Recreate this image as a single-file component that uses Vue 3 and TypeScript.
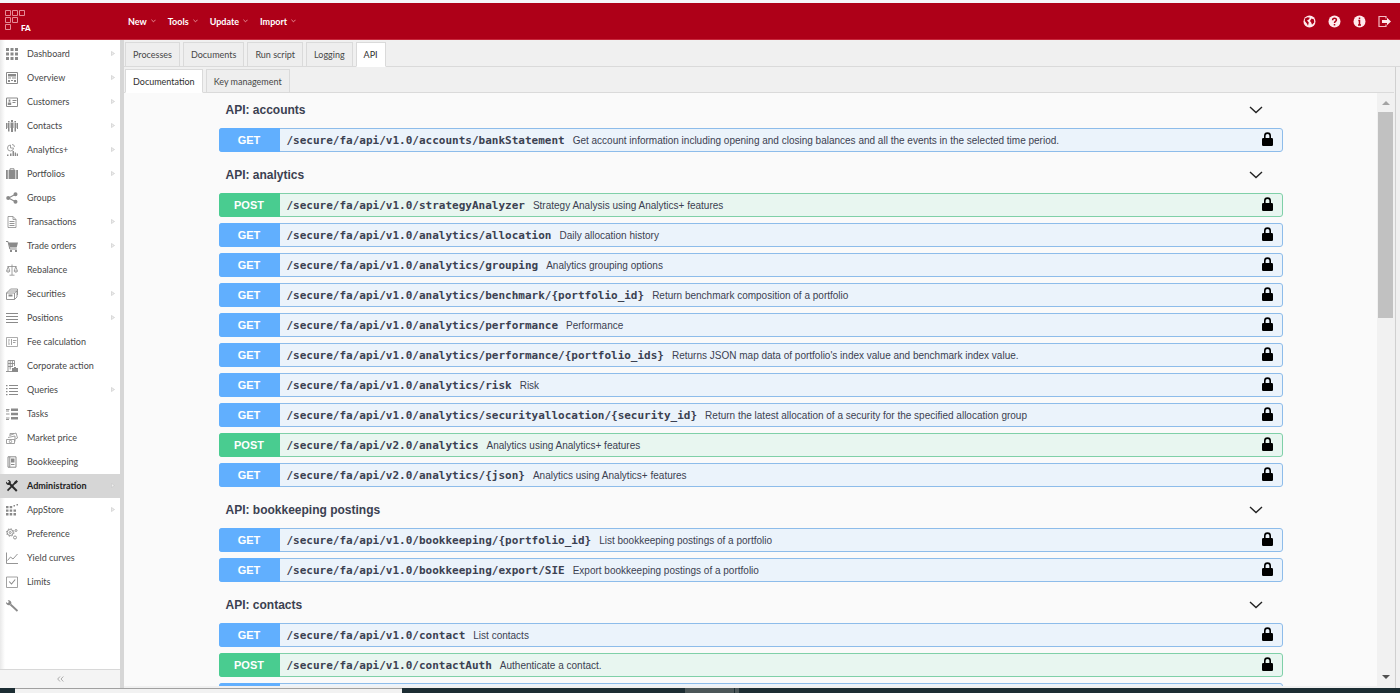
<script setup lang="ts">
import { ref } from 'vue'

type Method = 'GET' | 'POST'
interface NavItem { label: string; icon: string; more?: boolean }
interface Operation { method: Method; path: string; summary: string }
interface Section { title: string; operations: Operation[] }

const menus = ['New', 'Tools', 'Update', 'Import']
const tabs = ['Processes', 'Documents', 'Run script', 'Logging', 'API']
const subTabs = ['Documentation', 'Key management']
const activeTab = ref('API')
const activeSubTab = ref('Documentation')
const activeNav = ref('Administration')

const fill = (d: string) => `<path fill="currentColor" d="${d}"/>`
const line = (d: string, w = 1) =>
  `<path fill="none" stroke="currentColor" stroke-width="${w}" d="${d}"/>`

const icons: Record<string, string> = {
  dashboard: fill('M0 0h3v3H0zM4.500 0h3v3h-3zM9 0h3v3H9zM0 4.500h3v3H0zM4.500 4.500h3v3h-3zM9 4.500h3v3H9zM0 9h3v3H0zM4.500 9h3v3h-3zM9 9h3v3H9z'),
  overview: line('M.5.5h11v11H.5z') + fill('M2 2h8v2.500H2zM2 5.500h3v1H2zM6 5.500h4v1H6zM2 8h2v2H2zM5 8h2v1H5zM8 8h2v2H8z'),
  customers: line('M.5 2h11v8.500H.5z') + fill('M2.600 3.500h1.800v2.300H2.600zM1.800 6.400h3.400V9H1.800zM6.500 4h4v1h-4zM6.500 6h3v1h-3z'),
  contacts: fill('M5 0h2v2H5zM4.500 2.500h3V8H7v4H5V8h-.5zM2 1h1.600v1.500H2zM1.500 3h2v8.500H2V8h-.5zM8.400 1H10v1.500H8.400zM8.500 3h2v5H10v3.500H8.500zM0 3h1v6H0zM11 3h1v6h-1z'),
  analytics: line('M4.500 1a3 3 0 1 0 3 3h-3zM6 .5A2.500 2.500 0 0 1 8.500 3', 0.8) + fill('M1 10.500h1.500V12H1zM4 9.500h1.500V12H4zM6.500 7H8v5H6.500zM8.700 8.500h1.300V12H8.700zM10.700 9.500H12V12h-1.300z'),
  portfolios: line('M4 2V.8h4V2') + fill('M0 2h1.800v9H0zM2.600 2h6.800v9H2.600zM10.200 2H12v9h-1.800z'),
  groups: line('M9.500 2.300 2.500 6l7 3.700', 1.1) + fill('M9.500.3a2 2 0 1 1 0 4 2 2 0 0 1 0-4zM2.200 4a2 2 0 1 1 0 4 2 2 0 0 1 0-4zM9.500 7.700a2 2 0 1 1 0 4 2 2 0 0 1 0-4z'),
  transactions: line('M2 .5h5l3 3v8H2zM7 .5v3h3', 0.8) + line('M3.500 5.500h5M3.500 7.500h5M3.500 9.500h5', 0.9),
  orders: line('M0 1.500h2L3.800 9h7', 1) + fill('M2.500 2.500H12l-1.300 5H3.700zM4 10h2v2H4zM9 10h2v2H9z'),
  rebalance: line('M6 .5v10.500M3.500 11.200h5M1.500 2.500h9M2.200 2.500.6 7h3.200zM9.800 2.500 8.200 7h3.200zM.5 7.200c.6 1.400 2.800 1.400 3.400 0M8.100 7.200c.6 1.400 2.800 1.400 3.400 0', 0.8),
  securities: line('M.5 5h8v6.500h-8zM.5 5l2-2h8.500v6l-2.500 2.500M8.500 5 11 3M3 2.500 4.500 1h7v6', 0.9) + fill('M2.500 6.500h4v2h-4z'),
  positions: line('M0 1.500h12M0 4.500h12M0 7.500h12M0 10.500h12', 1.2),
  fee: line('M.5 1.500h11v9H.5z', 0.7) + line('M2 4h2M2 6h1.500M2 8h2M5.500 3v6M7 4.500h3.500M7 6.500h2.500', 0.8),
  corporate: line('M2 11.500V.5h6.500V6M0 11.500h6M2 3.500h6.500M2 6.500h5M4.200.5v9M6.400.5v6', 0.9) + fill('M6 8h6v4H6zM8 7h2v1H8z'),
  queries: fill('M0 1h1.500v1.200H0zM0 4h1.500v1.200H0zM0 7h1.500v1.200H0zM0 10h1.500v1.200H0zM3 1h9v1H3zM3 4h9v1H3zM3 7h9v1H3zM3 10h9v1H3z'),
  tasks: fill('M5 .5h7V3H5zM5 4.800h7v2.500H5zM5 9h7v2.500H5z') + line('M0 1.500h3.500M0 3h3M0 6h3.500M0 10h3.500M0 11.500h3', 0.9),
  market: line('M3.500 3.500 10 1l1.500 5-2 1M2 5.500l7-1.500V9.500M.5 7.500h8v4h-8zM4 3.300V1.500h4', 0.8) + line('M3.300 9.500a1.200 1.200 0 1 0 2.400 0 1.200 1.200 0 1 0-2.400 0', 0.8),
  book: line('M2 .8h8v10.400H2zM3.800.8v10.400', 1) + fill('M5 2.500h3.500v4H5zM5 8h3.500v1H5z'),
  admin: line('M3.200 3.200 10.800 11', 2) + line('M9.800 2.200 1.500 10.700', 1.700) + fill('M0 1.500 1.700 3.200 3.200 1.700 1.600.1C3.500-.5 5.300 1 4.800 3L3 4.900C1.200 5.200-.4 3.500 0 1.500zM8 2.300 10.500 0 12 1.500 9.700 4z'),
  appstore: fill('M0 2h2.500v2.300H0zM3.700 2h2.500v2.300H3.700zM7.500 1H9v1.500H7.500zM10.500 0H12v1.500h-1.500zM0 5.500h2.500v2.300H0zM3.700 5.500h2.500v2.300H3.700zM7.500 5.500H10v2.300H7.500zM0 9h2.500v2.500H0zM3.700 9h2.500v2.500H3.700zM7.500 9H10v2.500H7.500z'),
  preference: line('M1.200 4.500a3 3 0 1 0 6 0 3 3 0 1 0-6 0M3.200 4.500a1 1 0 1 0 2 0 1 1 0 1 0-2 0', 0.9) + `<circle cx="4.200" cy="4.500" r="3.700" fill="none" stroke="currentColor" stroke-width="1" stroke-dasharray="1.400 1.500"/>` + line('M7.500 9.500a1.500 1.500 0 1 0 3 0 1.500 1.500 0 1 0-3 0M9 2.500a1 1 0 1 0 2 0 1 1 0 1 0-2 0', 0.9),
  curves: line('M.5.5v11H12M1.500 8.500l3-3.500 2.500 2 4.500-5', 0.9),
  limits: line('M.5 1h11v10.500H.5z', 0.8) + line('M3.200 5.500l2.300 2.500 3.700-4.500', 1.1),
  wrench: line('M4.500 4.500 11.500 11', 1.8) + fill('M0 2 1.500 3.300 3 2 1.700.5C3.600-.2 5.700 1.200 5.400 3.500L4 5C2.200 5.800-.4 4.400 0 2z'),
}

const nav: NavItem[] = [
  { label: 'Dashboard', icon: 'dashboard', more: true },
  { label: 'Overview', icon: 'overview', more: true },
  { label: 'Customers', icon: 'customers', more: true },
  { label: 'Contacts', icon: 'contacts', more: true },
  { label: 'Analytics+', icon: 'analytics', more: true },
  { label: 'Portfolios', icon: 'portfolios', more: true },
  { label: 'Groups', icon: 'groups' },
  { label: 'Transactions', icon: 'transactions', more: true },
  { label: 'Trade orders', icon: 'orders', more: true },
  { label: 'Rebalance', icon: 'rebalance' },
  { label: 'Securities', icon: 'securities', more: true },
  { label: 'Positions', icon: 'positions', more: true },
  { label: 'Fee calculation', icon: 'fee' },
  { label: 'Corporate action', icon: 'corporate' },
  { label: 'Queries', icon: 'queries', more: true },
  { label: 'Tasks', icon: 'tasks' },
  { label: 'Market price', icon: 'market' },
  { label: 'Bookkeeping', icon: 'book' },
  { label: 'Administration', icon: 'admin', more: true },
  { label: 'AppStore', icon: 'appstore', more: true },
  { label: 'Preference', icon: 'preference' },
  { label: 'Yield curves', icon: 'curves' },
  { label: 'Limits', icon: 'limits' },
  { label: '', icon: 'wrench' },
]

const base = '/secure/fa/api/'
const op = (method: Method, path: string, summary: string): Operation => ({
  method,
  path: path ? base + path : '',
  summary,
})

const sections: Section[] = [
  {
    title: 'API: accounts',
    operations: [
      op('GET', 'v1.0/accounts/bankStatement', 'Get account information including opening and closing balances and all the events in the selected time period.'),
    ],
  },
  {
    title: 'API: analytics',
    operations: [
      op('POST', 'v1.0/strategyAnalyzer', 'Strategy Analysis using Analytics+ features'),
      op('GET', 'v1.0/analytics/allocation', 'Daily allocation history'),
      op('GET', 'v1.0/analytics/grouping', 'Analytics grouping options'),
      op('GET', 'v1.0/analytics/benchmark/{portfolio_id}', 'Return benchmark composition of a portfolio'),
      op('GET', 'v1.0/analytics/performance', 'Performance'),
      op('GET', 'v1.0/analytics/performance/{portfolio_ids}', 'Returns JSON map data of portfolio\'s index value and benchmark index value.'),
      op('GET', 'v1.0/analytics/risk', 'Risk'),
      op('GET', 'v1.0/analytics/securityallocation/{security_id}', 'Return the latest allocation of a security for the specified allocation group'),
      op('POST', 'v2.0/analytics', 'Analytics using Analytics+ features'),
      op('GET', 'v2.0/analytics/{json}', 'Analytics using Analytics+ features'),
    ],
  },
  {
    title: 'API: bookkeeping postings',
    operations: [
      op('GET', 'v1.0/bookkeeping/{portfolio_id}', 'List bookkeeping postings of a portfolio'),
      op('GET', 'v1.0/bookkeeping/export/SIE', 'Export bookkeeping postings of a portfolio'),
    ],
  },
  {
    title: 'API: contacts',
    operations: [
      op('GET', 'v1.0/contact', 'List contacts'),
      op('POST', 'v1.0/contactAuth', 'Authenticate a contact.'),
      op('GET', '', ''),
    ],
  },
]
</script>

<template>
  <div class="app">
    <header class="topbar">
      <svg class="logo" viewBox="0 0 30 24" aria-label="FA">
        <path class="logo-squares" d="M1.500 1.500h5v5h-5zM8.500 1.500h5v5h-5zM15.500 1.500h5v5h-5zM1.500 8.500h5v5h-5zM8.500 8.500h5v5h-5zM1.500 15.500h5v5h-5z" />
        <text x="17" y="22">FA</text>
      </svg>
      <nav class="menus">
        <button v-for="menu in menus" :key="menu" type="button">
          {{ menu }}
          <svg viewBox="0 0 6 4"><path d="M.5.5 3 3 5.500.5" /></svg>
        </button>
      </nav>
      <div class="tools">
        <button type="button" aria-label="Language">
          <svg viewBox="0 0 13 13"><circle class="disc" cx="6.500" cy="6.500" r="6" /><path class="mark" d="M2 3.500 4.500 2.200 7 2.800 5.500 4.800 4 5.500 5.800 7.500 5 10.800 3.800 8.500 1.800 6zM8.500 3.500 11 4.500 11.200 7.500 9 9.800 8.200 7.500 7 6z" /></svg>
        </button>
        <button type="button" aria-label="Help">
          <svg viewBox="0 0 13 13"><circle class="disc" cx="6.500" cy="6.500" r="6" /><path class="glyph" d="M4.600 5.200C4.600 2.700 8.400 2.700 8.400 5c0 1.400-1.900 1.400-1.900 2.900M6.500 8.900v1.600" /></svg>
        </button>
        <button type="button" aria-label="Information">
          <svg viewBox="0 0 13 13"><circle class="disc" cx="6.500" cy="6.500" r="6" /><path class="glyph" d="M6.500 2.600v1.500M5.300 5.500h1.200V10M5 10h3" /></svg>
        </button>
        <button type="button" aria-label="Log out">
          <svg viewBox="0 0 13 13"><path class="outline" d="M8 3.500v-2H1v10h7v-2" /><path class="disc" d="M4 5h5V2.800l4 3.700-4 3.700V8H4z" /></svg>
        </button>
      </div>
    </header>

    <div class="body">
      <aside class="sidebar">
        <nav class="side-nav">
          <button
            v-for="item in nav"
            :key="item.icon"
            type="button"
            class="side-item"
            :class="{ active: item.label === activeNav }"
            :aria-label="item.label || 'Settings'"
            @click="activeNav = item.label"
          >
            <svg class="side-icon" viewBox="0 0 12 12" v-html="icons[item.icon]" />
            <span class="side-label">{{ item.label }}</span>
            <svg v-if="item.more" class="side-more" viewBox="0 0 4 5"><path d="M.5.5 3.500 2.500.5 4.500z" /></svg>
          </button>
        </nav>
        <button type="button" class="collapse" aria-label="Collapse">
          <svg viewBox="0 0 7 6"><path d="M3 .5.700 3 3 5.500M6.300.5 4 3l2.300 2.500" /></svg>
        </button>
      </aside>

      <main class="main">
        <div class="tabs outer" role="tablist">
          <button
            v-for="tab in tabs"
            :key="tab"
            type="button"
            role="tab"
            :aria-selected="tab === activeTab"
            :class="{ active: tab === activeTab }"
            @click="activeTab = tab"
          >{{ tab }}</button>
        </div>
        <div class="panel">
          <div class="tabs" role="tablist">
            <button
              v-for="tab in subTabs"
              :key="tab"
              type="button"
              role="tab"
              :aria-selected="tab === activeSubTab"
              :class="{ active: tab === activeSubTab }"
              @click="activeSubTab = tab"
            >{{ tab }}</button>
          </div>
          <div class="viewer">
            <div class="docs">
              <section v-for="section in sections" :key="section.title" class="section">
                <h2>
                  {{ section.title }}
                  <button type="button" class="toggle" aria-label="Toggle section">
                    <svg viewBox="0 0 14 8"><path d="M1 1l6 5.500L13 1" /></svg>
                  </button>
                </h2>
                <div
                  v-for="(o, i) in section.operations"
                  :key="i"
                  class="operation"
                  :class="o.method.toLowerCase()"
                >
                  <span class="method">{{ o.path ? o.method : '' }}</span>
                  <code v-if="o.path">{{ o.path }}</code>
                  <span class="summary">{{ o.summary }}</span>
                  <button v-if="o.path" type="button" class="lock" aria-label="Authorize">
                    <svg viewBox="0 0 11 14"><path class="shackle" d="M2.800 7V3.800a2.700 2.700 0 0 1 5.400 0V7" /><rect x="0" y="6" width="11" height="8" rx="1.200" /></svg>
                  </button>
                </div>
              </section>
            </div>
            <div class="scrollbar">
              <svg class="arrow up" viewBox="0 0 8 4"><path d="M0 4 4 0l4 4z" /></svg>
              <div class="track"><div class="thumb"></div></div>
              <svg class="arrow down" viewBox="0 0 8 4"><path d="M0 0h8L4 4z" /></svg>
            </div>
          </div>
        </div>
      </main>
    </div>

    <footer class="taskbar">
      <span class="window"></span>
      <span class="task"></span>
      <span class="task-edge"></span>
    </footer>
  </div>
</template>

<style>
html,
body {
  margin: 0;
  background: #fff;
}
</style>

<style scoped>
* {
  box-sizing: border-box;
}
button {
  margin: 0;
  padding: 0;
  border: 0;
  background: none;
  color: inherit;
  font: inherit;
  cursor: pointer;
}
svg {
  display: block;
  flex: none;
}
.app {
  display: flex;
  flex-direction: column;
  height: 100vh;
  overflow: hidden;
  padding-top: 3px;
  background: #f5f5f8;
  color: #474747;
  font-family: Lato, "Liberation Sans", sans-serif;
  font-size: 9px;
}

.topbar {
  flex: none;
  display: flex;
  align-items: center;
  height: 37px;
  padding-right: 9px;
  background: #ae0018;
  border-bottom: 1px solid #c8283c;
  color: #fff;
}
.logo {
  width: 30px;
  height: 24px;
  margin-left: 4px;
}
.logo-squares {
  fill: none;
  stroke: #e58b97;
}
.logo text {
  fill: #fff;
  font-size: 8px;
  font-weight: 900;
}
.menus {
  display: flex;
  gap: 12px;
  margin-left: 94px;
  font-weight: 700;
}
.menus button {
  display: flex;
  align-items: center;
  gap: 4px;
}
.menus svg {
  width: 5px;
  height: 4px;
}
.menus path {
  fill: none;
  stroke: #f0a8b0;
}
.tools {
  display: flex;
  gap: 12px;
  margin-left: auto;
}
.tools svg {
  width: 13px;
  height: 13px;
}
.disc {
  fill: #ffe9ec;
}
.mark {
  fill: #ae0018;
}
.glyph {
  fill: none;
  stroke: #ae0018;
  stroke-width: 1.5;
}
.outline {
  fill: none;
  stroke: #f6bcc4;
  stroke-width: 1.2;
}

.body {
  flex: 1;
  min-height: 0;
  display: flex;
}
.sidebar {
  flex: none;
  display: flex;
  flex-direction: column;
  width: 120px;
  background: linear-gradient(90deg, #e9e9e9, #fff 5px);
}
.side-nav {
  flex: 1;
  display: flex;
  flex-direction: column;
  padding-top: 2px;
}
.side-item {
  display: flex;
  align-items: center;
  height: 24px;
  padding: 0 5px 1px 6px;
  text-align: left;
}
.side-item.active {
  background: #d6d6d6;
  color: #222;
  font-weight: 700;
}
.side-icon {
  width: 12px;
  height: 12px;
  margin-right: 9px;
  color: #8a8a8a;
  overflow: visible;
}
.active .side-icon {
  color: #2b2b2b;
}
.side-label {
  flex: 1;
  white-space: nowrap;
}
.side-more {
  width: 4px;
  height: 5px;
}
.side-more path {
  fill: #eee;
  stroke: #c8c8c8;
  stroke-width: 0.6;
}
.collapse {
  display: flex;
  align-items: center;
  justify-content: center;
  height: 19px;
  background: #f4f4f4;
  border-top: 1px solid #d8d8d8;
}
.collapse svg {
  width: 7px;
  height: 6px;
}
.collapse path {
  fill: none;
  stroke: #999;
  stroke-width: 0.8;
}

.main {
  flex: 1;
  min-width: 0;
  display: flex;
  flex-direction: column;
  padding-top: 2px;
  background: #f0f0f0;
  border-left: 4px solid #d6d6d6;
}
.tabs {
  flex: none;
  display: flex;
  gap: 3px;
  height: 24px;
  padding-left: 1px;
  border-bottom: 1px solid #dadada;
}
.tabs.outer {
  height: 25px;
}
.tabs button {
  margin-bottom: -1px;
  padding: 0 7px;
  background: #eee;
  border: 1px solid #dadada;
}
.tabs button.active {
  background: #fff;
  border-bottom-color: #fff;
  color: #2f2f2f;
}
.panel {
  flex: 1;
  min-height: 0;
  display: flex;
  flex-direction: column;
  margin-right: 4px;
  padding: 2px 1px 2px 0;
  border-right: 1px solid #d0d0d0;
}
.viewer {
  flex: 1;
  min-height: 0;
  display: flex;
  background: #fafafa;
}
.docs {
  flex: 1;
  overflow-y: auto;
  scrollbar-width: none;
  color: #3b4151;
  font-family: "Liberation Sans", Arial, sans-serif;
}
.section {
  max-width: 1064px;
  margin: 0 auto;
}
h2 {
  display: flex;
  align-items: center;
  justify-content: space-between;
  height: 35px;
  margin: 0;
  padding: 0 20px 2px 7px;
  font-size: 12px;
  font-weight: 700;
}
.toggle svg {
  width: 14px;
  height: 8px;
}
.toggle path {
  fill: none;
  stroke: #222;
  stroke-width: 1.4;
}
.operation {
  display: flex;
  align-items: center;
  height: 24px;
  margin-bottom: 6px;
  padding-right: 9px;
  border: 1px solid;
  border-radius: 3px;
}
.operation.get {
  background: #ebf3fb;
  border-color: #8dbcea;
}
.operation.post {
  background: #e8f6f0;
  border-color: #7fd0a8;
}
.method {
  flex: none;
  align-self: stretch;
  width: 61px;
  margin: -1px 0 -1px -1px;
  border-radius: 3px 0 0 3px;
  color: #fff;
  font-size: 11px;
  font-weight: 700;
  line-height: 24px;
  text-align: center;
}
.get .method {
  background: #61affe;
}
.post .method {
  background: #49cc90;
}
code {
  padding: 1px 8px 0 7px;
  font-family: "DejaVu Sans Mono", monospace;
  font-size: 11px;
  font-weight: 700;
  white-space: nowrap;
}
.summary {
  flex: 1;
  font-size: 10px;
  white-space: nowrap;
}
.lock {
  padding-bottom: 3px;
}
.lock svg {
  width: 11px;
  height: 14px;
}
.shackle {
  fill: none;
  stroke: #000;
  stroke-width: 1.6;
}

.scrollbar {
  flex: none;
  display: flex;
  flex-direction: column;
  align-items: center;
  width: 17px;
  padding: 8px 0 7px;
  background: #f1f1f1;
}
.arrow {
  width: 8px;
  height: 4px;
}
.arrow.up {
  fill: #a3a3a3;
}
.arrow.down {
  fill: #505050;
}
.track {
  flex: 1;
  width: 15px;
  padding: 7px 0;
}
.thumb {
  height: 37%;
  background: #c1c1c1;
}

.taskbar {
  flex: none;
  display: flex;
  height: 5px;
  padding-left: 15px;
  background: #1c2d33;
}
.window {
  width: 387px;
  background: #f2f2f2;
  border-top: 1px solid #a0a0a0;
}
.task {
  width: 49px;
  margin-left: 283px;
  background: #4b5658;
}
.task-edge {
  width: 4px;
  margin-left: 1px;
  background: #4b5658;
}
</style>
